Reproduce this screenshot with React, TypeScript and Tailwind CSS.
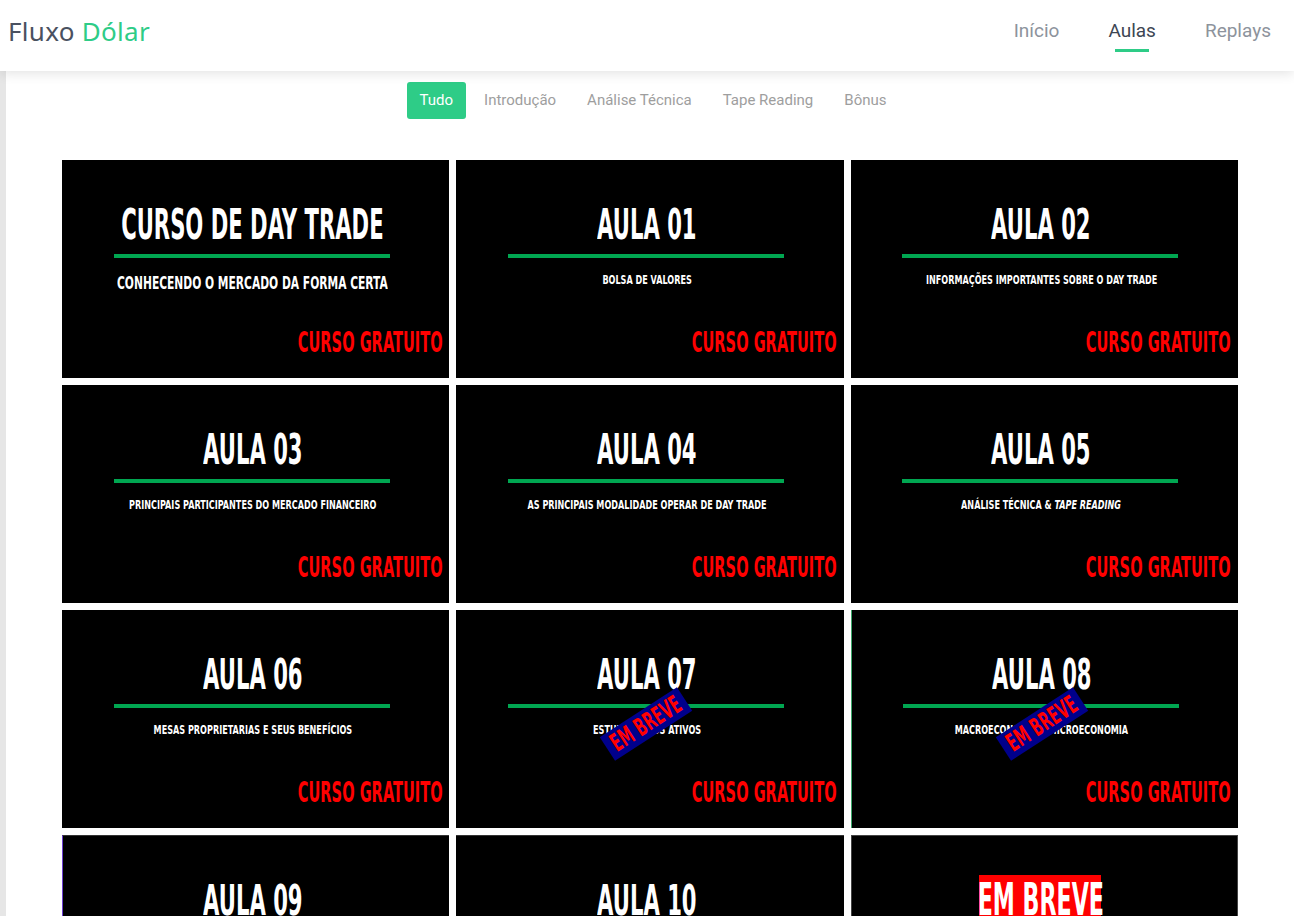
import React from "react";

const cond = { fontFamily: '"Liberation Sans Narrow", "DejaVu Sans Condensed", "Liberation Sans", sans-serif' };

type Card = {
  title: string;
  sub?: React.ReactNode;
  big?: boolean;
  stamp?: boolean;
  soon?: boolean;
  extra?: string;
};

const cards: Card[] = [
  { title: "CURSO DE DAY TRADE", sub: "CONHECENDO O MERCADO DA FORMA CERTA", big: true },
  { title: "AULA 01", sub: "BOLSA DE VALORES" },
  { title: "AULA 02", sub: "INFORMAÇÕES IMPORTANTES SOBRE O DAY TRADE" },
  { title: "AULA 03", sub: "PRINCIPAIS PARTICIPANTES DO MERCADO FINANCEIRO" },
  { title: "AULA 04", sub: "AS PRINCIPAIS MODALIDADE OPERAR DE DAY TRADE" },
  {
    title: "AULA 05",
    sub: (
      <>
        ANÁLISE TÉCNICA &amp; <i>TAPE READING</i>
      </>
    ),
  },
  { title: "AULA 06", sub: "MESAS PROPRIETARIAS E SEUS BENEFÍCIOS" },
  { title: "AULA 07", sub: "ESTUDANDO OS ATIVOS", stamp: true },
  { title: "AULA 08", sub: "MACROECONOMIA E MICROECONOMIA", stamp: true, extra: "border-l border-l-[#3aa66a]" },
  { title: "AULA 09", extra: "border-l border-l-[#6b3fd0] border-t border-t-[#333]" },
  { title: "AULA 10", extra: "border-t border-t-[#333]" },
  { title: "", soon: true, extra: "border border-[#444]" },
];

function Thumb({ c }: { c: Card }) {
  return (
    <div className={`relative h-[218px] bg-black overflow-hidden flex flex-col items-center ${c.extra ?? ""}`} style={cond}>
      {c.soon ? (
        <div className="mt-[39px] ml-[-8px] bg-[#ff0000] w-[122px] h-[60px] flex justify-center items-start">
          <span className="inline-block text-white font-bold text-[44px] leading-[50px] scale-x-[0.56] origin-center whitespace-nowrap">
            EM BREVE
          </span>
        </div>
      ) : (
        <>
          <div className="h-[90px] w-full flex items-end justify-center pr-[6px]">
            <span className="inline-block text-white font-bold text-[42px] leading-[50px] scale-x-[0.56] origin-center whitespace-nowrap">
              {c.title}
            </span>
          </div>
          <div className="mt-[4px] ml-[-8px] w-[276px] h-[4px] bg-[#00a651]" />
          {c.sub && (
            <div className={`w-full flex justify-center pr-[6px] ${c.big ? "mt-[14px]" : "mt-[13px]"}`}>
              <span
                className={`inline-block text-white font-bold whitespace-nowrap origin-center ${
                  c.big ? "text-[17px] leading-[22px] scale-x-[0.7]" : "text-[12.5px] leading-[18px] scale-x-[0.72]"
                }`}
              >
                {c.sub}
              </span>
            </div>
          )}
          <div className="absolute right-[7px] top-[166px]">
            <span className="inline-block text-[#ff0000] font-bold text-[29px] leading-[32px] scale-x-[0.56] origin-right whitespace-nowrap">
              CURSO GRATUITO
            </span>
          </div>
          {c.stamp && (
            <div className="absolute left-[144px] top-[100px] w-[92px] h-[28px] bg-[#00008b] rotate-[-33deg] flex items-center justify-center">
              <span className="inline-block text-[#ff0000] font-bold text-[25px] leading-[28px] scale-x-[0.62] whitespace-nowrap">
                EM BREVE
              </span>
            </div>
          )}
        </>
      )}
    </div>
  );
}

export default function App() {
  const tabs = ["Tudo", "Introdução", "Análise Técnica", "Tape Reading", "Bônus"];
  return (
    <div className="min-h-screen bg-white" style={{ fontFamily: "Roboto, sans-serif" }}>
      <header className="relative z-10 h-[71px] bg-white flex items-start justify-between shadow-[0_2px_12px_rgba(0,0,0,0.12)]">
        <div
          className="pl-[8px] pt-[14px] text-[26px] leading-[34px] text-[#4a5160] tracking-[0.3px]"
          style={{ fontFamily: '"Noto Sans", "Open Sans", sans-serif' }}
        >
          Fluxo <span className="text-[#2ecc87]">Dólar</span>
        </div>
        <nav className="flex items-start gap-[49px] pr-[23px] pt-[18px] text-[19px] leading-[26px]">
          <a className="text-[#8d939c]">Início</a>
          <a className="relative text-[#3d4653]">
            Aulas
            <span className="absolute left-[7px] right-[7px] top-[31px] h-[3px] bg-[#2ecc87]" />
          </a>
          <a className="text-[#8d939c]">Replays</a>
        </nav>
      </header>
      <div className="flex">
        <div className="w-[6px] bg-[#e6e6e6] self-stretch" />
        <main className="flex-1 flex flex-col items-center">
          <div className="mt-[11px] flex items-center gap-[5px] pl-[6px]">
            {tabs.map((t, i) => (
              <button
                key={t}
                className={
                  i === 0
                    ? "h-[37px] px-[13px] rounded-[3px] bg-[#2ecc87] text-white text-[15px]"
                    : "h-[37px] px-[13px] text-[#9e9e9e] text-[15px]"
                }
              >
                {t}
              </button>
            ))}
          </div>
          <div className="mt-[41px] w-[1176px] grid grid-cols-3 gap-[7px]">
            {cards.map((c, i) => (
              <Thumb key={i} c={c} />
            ))}
          </div>
          <div className="h-[40px]" />
        </main>
      </div>
    </div>
  );
}
